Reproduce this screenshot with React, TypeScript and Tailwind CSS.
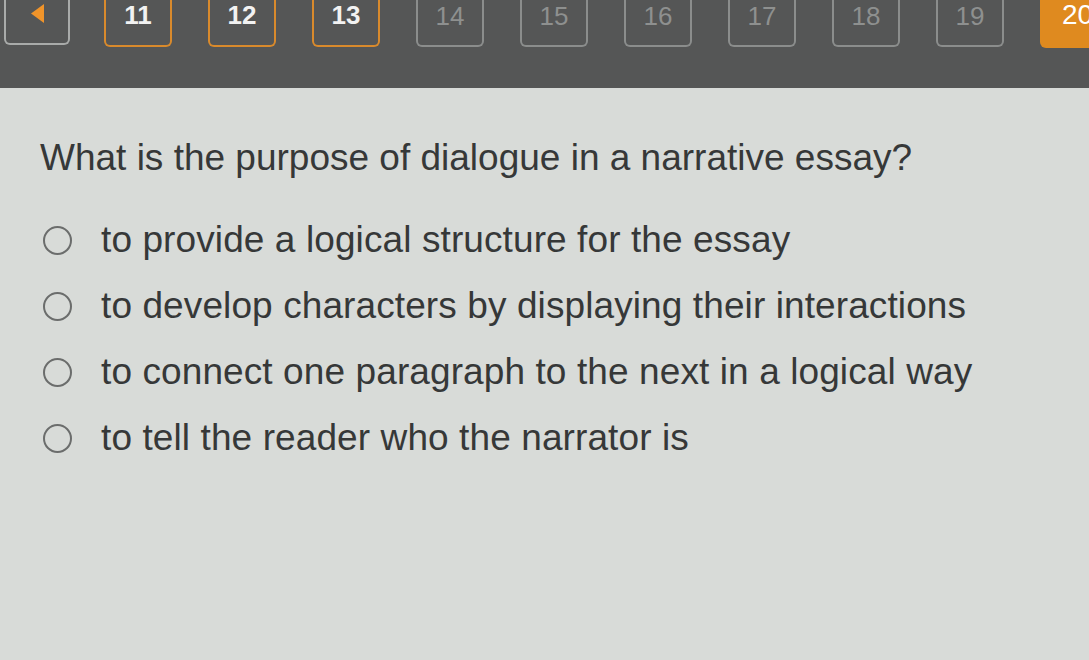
const pages = [11, 12, 13, 14, 15, 16, 17, 18, 19];
const visited = new Set([11, 12, 13]);

const choices = [
  'to provide a logical structure for the essay',
  'to develop characters by displaying their interactions',
  'to connect one paragraph to the next in a logical way',
  'to tell the reader who the narrator is',
];

const sans = { fontFamily: '"Liberation Sans", Arial, sans-serif' };

export default function App() {
  return (
    <div className="w-[1089px] h-[660px] overflow-hidden bg-[#d8dbd8]" style={sans}>
      {/* question navigator */}
      <div className="h-[88px] bg-[#555656] flex items-start gap-[36px] pl-[4px]">
        <div className="w-[66px] h-[45px] shrink-0 -mr-[2px] border-2 border-t-0 border-[#a9abaa] rounded-b-md flex justify-center pt-[4px]">
          <svg width="15" height="19" viewBox="0 0 15 19">
            <path d="M14 0 L14 19 L1 9.5 Z" fill="#f0942a" />
          </svg>
        </div>
        {pages.map((n) => {
          const on = visited.has(n);
          return (
            <div
              key={n}
              className={
                on
                  ? 'w-[68px] h-[47px] shrink-0 border-2 border-t-0 border-[#d98a2c] rounded-b-md flex justify-center pt-[2px] text-[26px] leading-none font-semibold text-[#f2f2f2]'
                  : 'w-[68px] h-[47px] shrink-0 border-2 border-t-0 border-[#8b8d8c] rounded-b-md flex justify-center pt-[3px] text-[26px] leading-none text-[#8e908f]'
              }
            >
              {n}
            </div>
          );
        })}
        <div className="w-[68px] h-[48px] shrink-0 bg-[#df8a1f] rounded-bl-md flex pl-[22px] pt-[1px] text-[28px] leading-none text-white">
          20
        </div>
      </div>

      <div className="pl-[40px] pt-[50px] text-[#363838]">
        <div className="text-[37px] leading-[40px]">What is the purpose of dialogue in a narrative essay?</div>
        <div className="mt-[42px] flex flex-col gap-[26px]">
          {choices.map((c) => (
            <label key={c} className="flex items-center h-[40px]">
              <span className="w-[29px] h-[29px] rounded-full border-2 border-[#6b6d6c] ml-[3px] shrink-0" />
              <span className="ml-[29px] text-[37px] leading-[40px] tracking-[0.1px]">{c}</span>
            </label>
          ))}
        </div>
      </div>
    </div>
  );
}
